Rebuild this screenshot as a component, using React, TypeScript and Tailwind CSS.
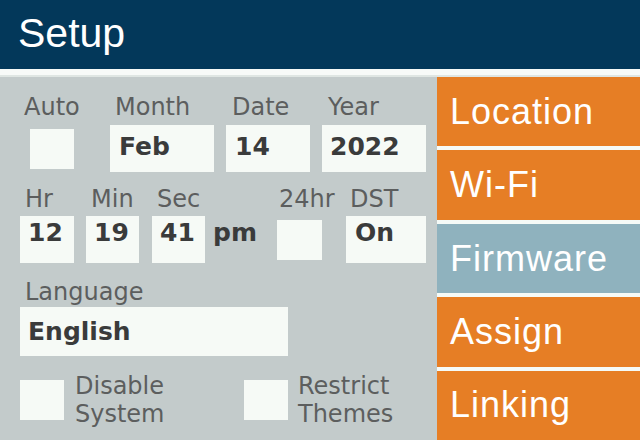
const label = "font-['DejaVu_Sans',sans-serif] text-[24px] leading-[28px] text-[#5c5e5e] whitespace-nowrap";
const value = "font-['DejaVu_Sans',sans-serif] font-bold text-[25px] leading-[28px] text-[#3a3b3b] whitespace-nowrap";
const box = "bg-[#f6faf6] flex items-center";

const navItems = [
  { name: "Location", active: false },
  { name: "Wi-Fi", active: false },
  { name: "Firmware", active: true },
  { name: "Assign", active: false },
  { name: "Linking", active: false },
];

function Checkbox({ className = "" }: { className?: string }) {
  return <div className={`h-[40px] w-[44px] shrink-0 bg-[#f6faf6] ${className}`} />;
}

export default function App() {
  return (
    <div className="flex h-[440px] w-[640px] flex-col overflow-hidden bg-[#c3cbcb]">
      <header className="h-[69px] shrink-0 bg-[#03385a] pl-[18px] pt-[13px]">
        <h1 className="font-['Liberation_Sans',Arial,sans-serif] text-[41px] leading-[41px] text-white">Setup</h1>
      </header>
      <div className="h-[8px] shrink-0 border-b-2 border-[#dfe6e3] bg-[#f7faf8]" />

      <div className="flex min-h-0 flex-1">
        {/* form */}
        <section className="w-[437px] shrink-0">
          {/* row 1 */}
          <div className="mt-[16px] flex">
            <div className="ml-[24px] w-[56px] shrink-0">
              <div className={label}>Auto</div>
              <div className="mt-[4px] flex h-[47px] items-center">
                <Checkbox className="ml-[6px]" />
              </div>
            </div>
            <div className="ml-[30px] w-[104px] shrink-0">
              <div className={`${label} pl-[5px]`}>Month</div>
              <div className={`${box} mt-[4px] h-[47px] pb-[4px] pl-[9px]`}>
                <span className={value}>Feb</span>
              </div>
            </div>
            <div className="ml-[12px] w-[84px] shrink-0">
              <div className={`${label} pl-[6px]`}>Date</div>
              <div className={`${box} mt-[4px] h-[47px] pb-[4px] pl-[9px]`}>
                <span className={value}>14</span>
              </div>
            </div>
            <div className="ml-[12px] w-[104px] shrink-0">
              <div className={`${label} pl-[6px]`}>Year</div>
              <div className={`${box} mt-[4px] h-[47px] pb-[4px] pl-[8px]`}>
                <span className={value}>2022</span>
              </div>
            </div>
          </div>

          {/* row 2 */}
          <div className="mt-[13px] flex">
            <div className="ml-[20px] w-[54px] shrink-0">
              <div className={`${label} pl-[5px]`}>Hr</div>
              <div className={`${box} mt-[3px] h-[47px] pb-[13px] pl-[8px]`}>
                <span className={value}>12</span>
              </div>
            </div>
            <div className="ml-[12px] w-[53px] shrink-0">
              <div className={`${label} pl-[5px]`}>Min</div>
              <div className={`${box} mt-[3px] h-[47px] pb-[13px] pl-[8px]`}>
                <span className={value}>19</span>
              </div>
            </div>
            <div className="ml-[13px] w-[53px] shrink-0">
              <div className={`${label} pl-[5px]`}>Sec</div>
              <div className={`${box} mt-[3px] h-[47px] pb-[13px] pl-[8px]`}>
                <span className={value}>41</span>
              </div>
            </div>
            <div className="ml-[8px] w-[64px] shrink-0">
              <div className="h-[28px]" />
              <div className="mt-[3px] flex h-[47px] items-center pb-[13px]">
                <span className={value}>pm</span>
              </div>
            </div>
            <div className="w-[45px] shrink-0">
              <div className={`${label} pl-[2px]`}>24hr</div>
              <div className="mt-[3px] flex h-[47px] items-center">
                <Checkbox className="w-[45px]" />
              </div>
            </div>
            <div className="ml-[24px] w-[80px] shrink-0">
              <div className={`${label} pl-[4px]`}>DST</div>
              <div className={`${box} mt-[3px] h-[47px] pb-[13px] pl-[9px]`}>
                <span className={value}>On</span>
              </div>
            </div>
          </div>

          {/* row 3 */}
          <div className="ml-[20px] mt-[15px]">
            <div className={`${label} pl-[5px]`}>Language</div>
            <div className={`${box} mt-[1px] h-[49px] w-[268px] pl-[8px]`}>
              <span className={value}>English</span>
            </div>
          </div>

          {/* row 4 */}
          <div className="ml-[20px] mt-[16px] flex items-center">
            <Checkbox />
            <div className={`${label} ml-[11px] w-[169px] shrink-0 leading-[26px]`}>
              Disable
              <br />
              System
            </div>
            <Checkbox />
            <div className={`${label} ml-[10px] leading-[26px]`}>
              Restrict
              <br />
              Themes
            </div>
          </div>
        </section>

        {/* nav */}
        <nav className="flex flex-1 flex-col gap-[4px] bg-[#f5faf7]">
          {navItems.map((item) => (
            <div
              key={item.name}
              className={`flex flex-1 items-center pl-[13px] font-['Liberation_Sans',Arial,sans-serif] text-[36px] leading-[36px] tracking-[1px] text-white ${
                item.active ? "bg-[#8fb2be]" : "bg-[#e67e25]"
              }`}
            >
              {item.name}
            </div>
          ))}
        </nav>
      </div>
    </div>
  );
}
